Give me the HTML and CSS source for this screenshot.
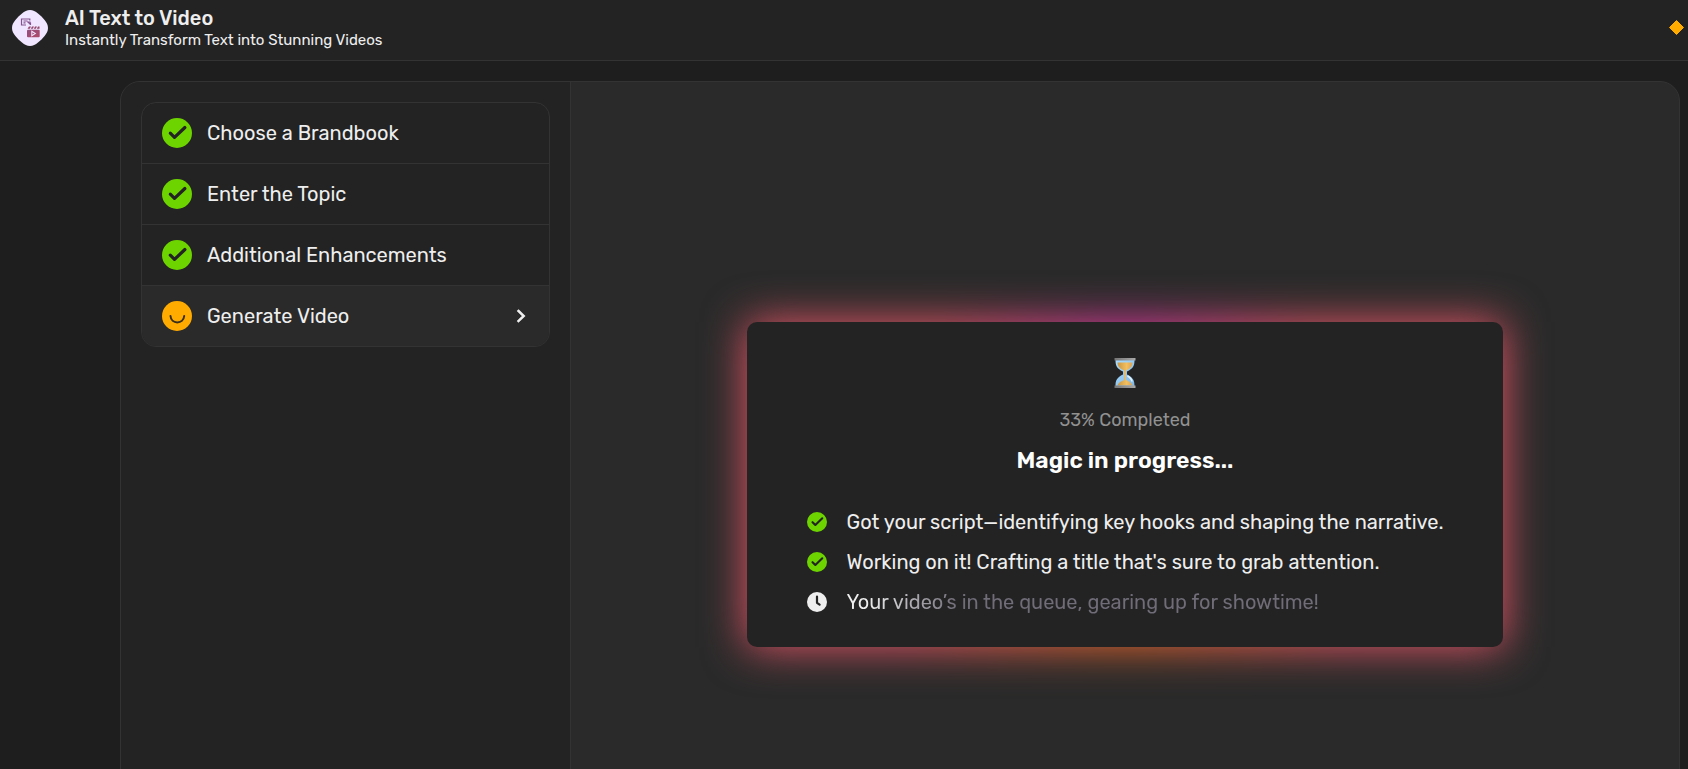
FILE: index.html
```html
<!DOCTYPE html>
<html lang="en">
<head>
<meta charset="utf-8">
<title>AI Text to Video</title>
<link rel="stylesheet" href="styles.css">
</head>
<body>
<svg class="sprite" aria-hidden="true">
  <symbol id="done" viewBox="0 0 30 30">
    <circle cx="15" cy="15" r="15" fill="#6dd400"/>
    <path d="M8.300 15.200L12.500 19.400L22.900 9.500" fill="none" stroke="#232323" stroke-width="3.200" stroke-linecap="round" stroke-linejoin="round"/>
  </symbol>
</svg>

<header class="topbar">
  <svg class="logo" viewBox="0 0 36 36" aria-hidden="true">
    <defs>
      <linearGradient id="plum" x1="0" y1="0" x2="1" y2="1">
        <stop offset="0" stop-color="#94507f"/>
        <stop offset="1" stop-color="#b04a68"/>
      </linearGradient>
    </defs>
    <path d="M18 0C21 0 23.500 1.300 26 3.400C28.500 5.300 30.700 7.500 32.600 10C34.700 12.500 36 15 36 18C36 21 34.700 23.500 32.600 26C30.700 28.500 28.500 30.700 26 32.600C23.500 34.700 21 36 18 36C15 36 12.500 34.700 10 32.600C7.500 30.700 5.300 28.500 3.400 26C1.300 23.500 0 21 0 18C0 15 1.300 12.500 3.400 10C5.300 7.500 7.500 5.300 10 3.400C12.500 1.300 15 0 18 0Z" fill="#f0e6ff"/>
    <path d="M17.800 10.500V9H9.500V15H14M11.500 11H15.500M11.500 12.800H13.500M15.200 12H18.500M16 12L18.500 14.500M18.500 12.500V15" fill="none" stroke="#85528f" stroke-width="1.200"/>
    <path d="M15.500 18.800L17 16.500H19L17.800 18.800ZM20 16.500H22L20.800 18.800H18.800ZM23 16.500H25L23.800 18.800H21.800ZM26 16.500H27.500V18.800H24.800Z" fill="#94486d"/>
    <rect x="15" y="19.800" width="12.700" height="7.400" rx="1" fill="url(#plum)"/>
    <path d="M19.800 21.300V25.700L23.300 23.500Z" fill="none" stroke="#f0e6ff" stroke-width="1.100"/>
  </svg>
  <div class="heading">
    <h1 class="title">AI Text to Video</h1>
    <p class="subtitle">Instantly Transform Text into Stunning Videos</p>
  </div>
  <svg class="gem" viewBox="0 0 16 16" aria-hidden="true"><path d="M8.500 .5L15.500 7.500L8.500 14.500L1.500 7.500Z" fill="#ffab00" stroke="#ffab00" stroke-width="1" stroke-linejoin="round"/></svg>
</header>

<main class="workspace">
  <aside class="sidebar">
    <ol class="steps">
      <li><button class="step" type="button"><svg class="step-icon" aria-hidden="true"><use href="#done"/></svg><span>Choose a Brandbook</span></button></li>
      <li><button class="step" type="button"><svg class="step-icon" aria-hidden="true"><use href="#done"/></svg><span>Enter the Topic</span></button></li>
      <li><button class="step" type="button"><svg class="step-icon" aria-hidden="true"><use href="#done"/></svg><span>Additional Enhancements</span></button></li>
      <li><button class="step step-current" type="button" aria-current="step">
        <svg class="step-icon" viewBox="0 0 30 30" aria-hidden="true"><circle cx="15" cy="15" r="15" fill="#ffab00"/><path d="M8.500 15C9 23.500 21.500 23.500 22.200 15" fill="none" stroke="#3a2f1c" stroke-width="2" stroke-linecap="round"/></svg>
        <span>Generate Video</span>
        <svg class="chevron" viewBox="0 0 16 16" aria-hidden="true"><path d="M5.500 3L10.700 8L5.500 13" fill="none" stroke="#eee" stroke-width="2.500" stroke-linecap="square"/></svg>
      </button></li>
    </ol>
  </aside>

  <section class="stage">
    <div class="card-glow">
      <div class="card">
        <svg class="hourglass" viewBox="0 0 22 32" aria-hidden="true">
          <defs>
            <linearGradient id="glass" x1="0" y1="0" x2="1" y2="1"><stop offset="0" stop-color="#a9dcff"/><stop offset="1" stop-color="#7fb7e6"/></linearGradient>
            <linearGradient id="sand" x1="0" y1="0" x2="1" y2="0"><stop offset="0" stop-color="#c99645"/><stop offset=".6" stop-color="#f2bf5e"/><stop offset="1" stop-color="#dba257"/></linearGradient>
            <linearGradient id="cap" x1="0" y1="0" x2="1" y2="0"><stop offset="0" stop-color="#757575"/><stop offset="1" stop-color="#a9a9a9"/></linearGradient>
          </defs>
          <path d="M1.500 3H20.500C20.500 9 19 11.500 13 14.500V17.500C19 20.500 20.500 23 20.500 29H1.500C1.500 23 3 20.500 9 17.500V14.500C3 11.500 1.500 9 1.500 3Z" fill="url(#glass)"/>
          <path d="M3.500 5.500H18.500C18.300 9.500 16.500 11.500 12 13.500V23C16 24.500 18 26.500 18.500 28.500H3.500C4 26.500 6 24.500 10.300 23V13.500C5.500 11.500 3.700 9.500 3.500 5.500Z" fill="url(#sand)"/>
          <path d="M13.500 19Q17.500 21 18 24.500" fill="none" stroke="#e3f4ff" stroke-width="1.600"/>
          <path d="M.5 1H21.500V3.500H.5ZM.5 28.500H21.500V31H.5Z" fill="url(#cap)"/>
        </svg>
        <p class="progress">33% Completed</p>
        <h2 class="status">Magic in progress...</h2>
        <ul class="tasks">
          <li class="task"><svg class="task-icon" aria-hidden="true"><use href="#done"/></svg><span>Got your script—identifying key hooks and shaping the narrative.</span></li>
          <li class="task"><svg class="task-icon" aria-hidden="true"><use href="#done"/></svg><span>Working on it! Crafting a title that's sure to grab attention.</span></li>
          <li class="task"><svg class="task-icon" viewBox="0 0 20 20" aria-hidden="true"><circle cx="10" cy="10" r="10" fill="#eee"/><path d="M10 4.600V10.800L12.600 12.600" fill="none" stroke="#232323" stroke-width="2.200" stroke-linecap="round" stroke-linejoin="round"/></svg><span class="shimmer">Your video’s in the queue, gearing up for showtime!</span></li>
        </ul>
      </div>
    </div>
  </section>
</main>
</body>
</html>
```

FILE: styles.css
```css
* { box-sizing: border-box; }

body {
  height: 100vh;
  margin: 0;
  overflow: hidden;
  background: #1e1e1e;
  color: #eee;
  font: 400 20px/24px Rubik, Roboto, sans-serif;
}

h1, h2, p, ol, ul { margin: 0; padding: 0; }
ol, ul { list-style: none; }
svg { display: block; flex: none; }
.sprite { position: absolute; width: 0; height: 0; }

.topbar {
  display: flex;
  align-items: center;
  height: 61px;
  padding: 0 4px 5px 12px;
  background: #232323;
  border-bottom: 1px solid #333;
}
.logo { width: 36px; height: 36px; }
.heading { flex: 1; padding-left: 17px; }
.title { font-size: 20px; line-height: 24px; font-weight: 500; }
.subtitle { font-size: 15px; line-height: 20px; }
.gem { width: 16px; height: 16px; }

.workspace {
  display: flex;
  min-height: 806px;
  margin: 20px 8px 0 120px;
  overflow: hidden;
  border: 1px solid #333;
  border-radius: 20px;
  background: #2a2a2a;
}
.sidebar {
  flex: none;
  width: 450px;
  padding: 20px;
  background: #232323;
  border-right: 1px solid #333;
}
.steps {
  overflow: hidden;
  border: 1px solid #333;
  border-radius: 15px;
}
.steps li + li { border-top: 1px solid #333; }
.step {
  display: flex;
  align-items: center;
  gap: 15px;
  width: 100%;
  height: 60px;
  padding: 0 20px;
  border: 0;
  background: none;
  color: inherit;
  font: inherit;
  text-align: left;
}
.step-current { background: #2a2a2a; }
.step-icon { width: 30px; height: 30px; }
.chevron { width: 16px; height: 16px; margin-left: auto; }

.stage {
  flex: 1;
  display: flex;
  align-items: center;
  justify-content: center;
  padding: 20px;
}
.card-glow { position: relative; }
.card-glow::before {
  content: "";
  position: absolute;
  inset: 0;
  background:
    radial-gradient(circle 180px at 50% 0, #e038a8, transparent),
    radial-gradient(circle 220px at 50% 100%, #ec6a28, transparent),
    #e85668;
  filter: blur(22px);
}
.card {
  position: relative;
  display: flex;
  flex-direction: column;
  align-items: center;
  padding: 35px 60px 33px;
  border-radius: 10px;
  background: #232323;
}
.hourglass { width: 22px; height: 32px; }
.progress { margin-top: 20px; color: #919191; font-size: 18px; line-height: 22px; }
.status { margin-top: 15px; color: #fff; font-size: 23px; line-height: 28px; font-weight: 600; }
.tasks {
  display: grid;
  gap: 16px;
  width: 100%;
  margin-top: 36px;
}
.task { display: flex; align-items: center; gap: 20px; }
.task-icon { width: 20px; height: 20px; }
.shimmer {
  background: linear-gradient(90deg, #eee 20px, #706c78 110px);
  background-clip: text;
  color: transparent;
}
```
